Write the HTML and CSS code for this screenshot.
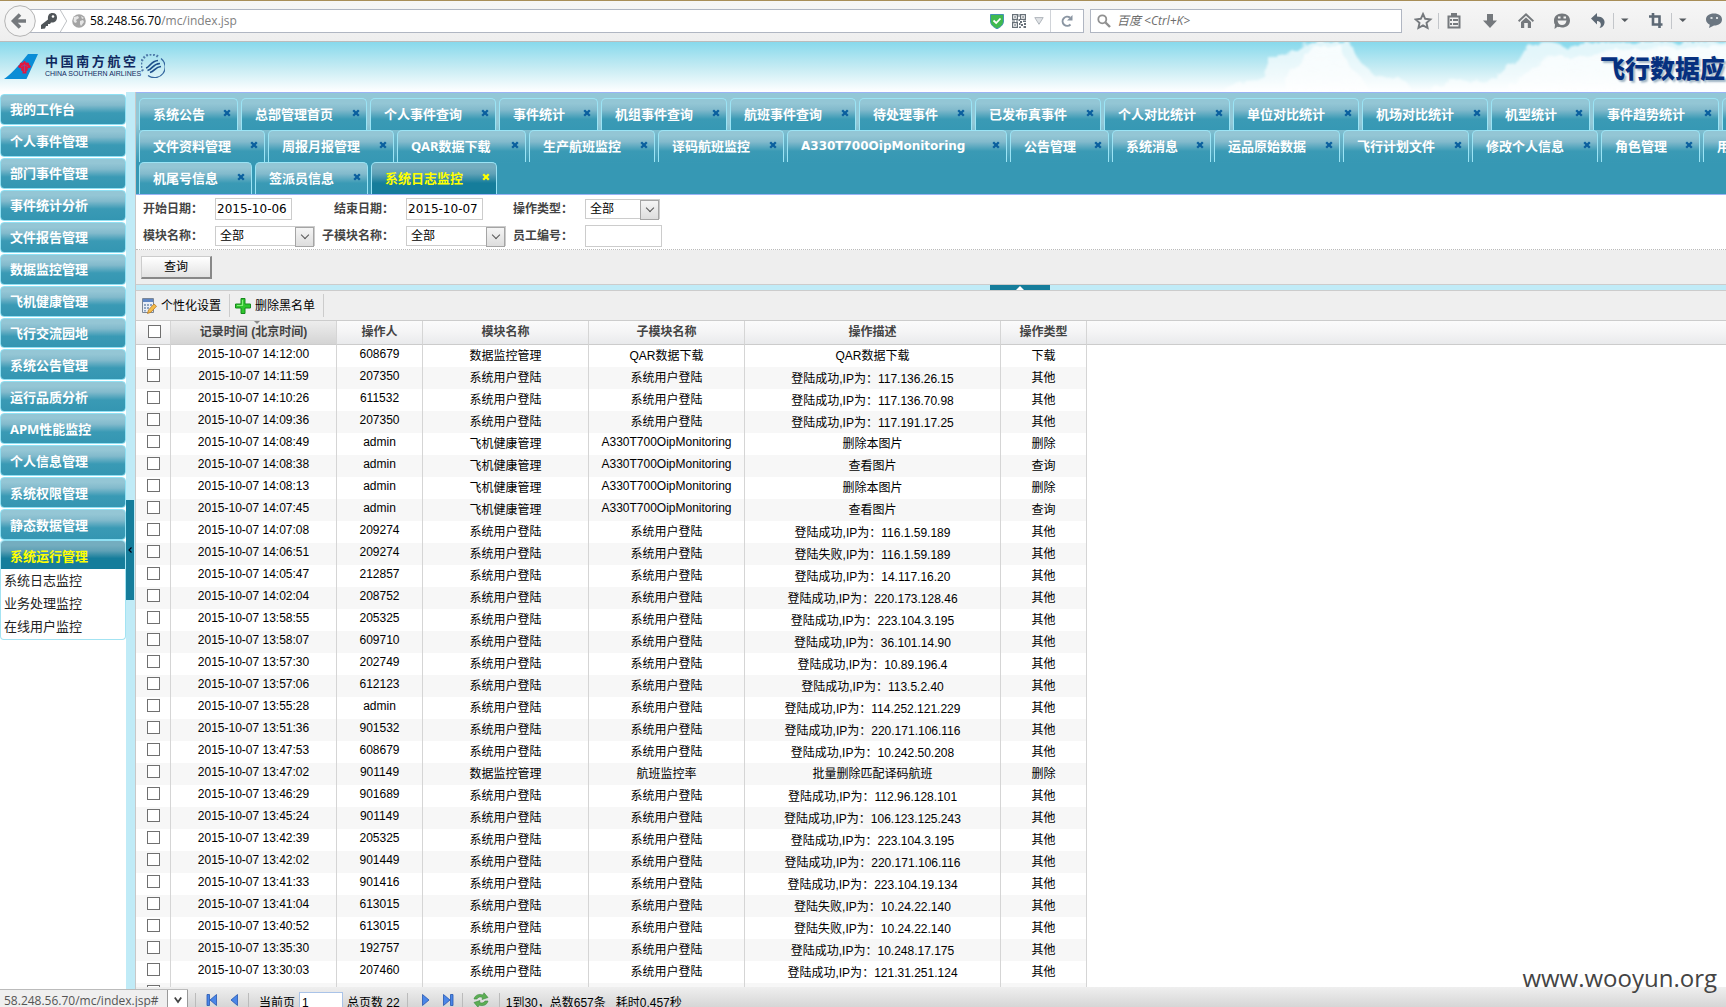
FILE: index.html
```html
<!DOCTYPE html>
<html lang="zh-CN">
<head>
<meta charset="utf-8">
<title>飞行数据应用系统</title>
<link rel="stylesheet" href="styles.css">
</head>
<body>
<svg class="defs" width="0" height="0" aria-hidden="true">
  <symbol id="close" viewBox="0 0 8 8"><path d="M1.2 1.2L6.800 6.800M6.800 1.200L1.200 6.800" stroke="currentColor" stroke-width="2.300" fill="none"/></symbol>
</svg>

<header class="browser">
  <div class="address">
    <button class="back" aria-label="后退"><svg viewBox="0 0 32 32"><circle cx="16" cy="16" r="15.300" fill="#f5f5f5" stroke="#b3b3b3"/><path d="M22 16H12M16 9.500L9.500 16L16 22.500" fill="none" stroke="#75797d" stroke-width="3.600"/></svg></button>
    <svg class="key" viewBox="0 0 18 18"><path d="M1 17V13L8 7.500C7.500 3 9.500 1 12.500 1C15.500 1 17 3 17 5.500C17 9 14.500 11 11 10.500L10 12H8V14H6L5 16.500Z" fill="#505559"/><circle cx="13" cy="4.500" r="1.300" fill="#fff"/></svg>
    <svg class="chev" viewBox="0 0 9 24"><path d="M1 0L8 12L1 24" fill="none" stroke="#b9bcc0"/></svg>
    <svg class="globe" viewBox="0 0 14 14"><circle cx="7" cy="7" r="6.800" fill="#a4a4a4"/><path d="M2 3L6 2L7 4L4 6L5 8L3 9L1.500 7ZM8 7L11 6L12 8L9 12L8 10ZM9 2L12 4L10 5Z" fill="#e6e6e6"/></svg>
    <span class="url"><b>58.248.56.70</b>/mc/index.jsp</span>
    <svg class="shield" viewBox="0 0 14 15"><path d="M0.500 0.500H13.500V7C13.500 11 10 13.500 7 14.700C4 13.500 0.500 11 0.500 7Z" fill="#3fba50" stroke="#4593b5"/><path d="M3.500 6.500L6.200 9L10.500 4.500" fill="none" stroke="#fff" stroke-width="1.800"/></svg>
    <svg class="qr" viewBox="0 0 14 14"><g fill="none" stroke="#677078" stroke-width="1.200"><path d="M.600.600H5.400V5.400H.600ZM8.600.600H13.400V5.400H8.600ZM.600 8.600H5.400V13.400H.600Z"/></g><path d="M2.300 2.300h1.500v1.500h-1.500zM10.300 2.300h1.500v1.500h-1.500zM2.300 10.300h1.500v1.500h-1.500zM6.500 0h1v3h-1zM6.500 5h1.500v2h-1.500zM0 6.500h3v1h-3zM8 7h2v2h-2zM11 6.500h3v1.500h-3zM7 9h1.500v2H7zM9 10h2v2H9zM12 9h2v2h-2zM7 12.500h2V14H7zM11.500 12h2.500v2h-2.500zM4 6.500h2v1h-2z" fill="#677078"/></svg>
    <svg class="drop" viewBox="0 0 10 8"><path d="M.800.600H9.200L5 7.300Z" fill="#dfe2e5" stroke="#b0b6bc"/></svg>
    <svg class="reload" viewBox="0 0 12 12"><path d="M9.500 9.500A4.600 4.600 0 1 1 9 2.600" fill="none" stroke="#8a95a2" stroke-width="2"/><path d="M11.500 0V5.500H6Z" fill="#8a95a2"/></svg>
  </div>
  <label class="search"><svg viewBox="0 0 14 14"><circle cx="5.300" cy="5.300" r="4" fill="none" stroke="#909090" stroke-width="1.800"/><path d="M8.500 8.500L13 13" stroke="#909090" stroke-width="2.400"/></svg><input placeholder="百度 &lt;Ctrl+K&gt;" aria-label="搜索"></label>
  <svg class="tools" viewBox="0 0 312 24">
    <path d="M9 5L11.200 9.800L16.400 10.400L12.500 13.900L13.600 19L9 16.400L4.400 19L5.500 13.900L1.600 10.400L6.800 9.800Z" fill="none" stroke="#75797d" stroke-width="1.900"/>
    <path d="M24.500 4V20M199.500 4V20M257.500 4V20" stroke="#c3c6ca"/>
    <path d="M34.500 7.500H45.500V18.500H34.500Z" fill="none" stroke="#75797d" stroke-width="2"/><path d="M37 4H43V8H37ZM36 10H38V12H36ZM39 10H44V12H39ZM36 14H38V16H36ZM39 14H44V16H39Z" fill="#75797d"/>
    <path d="M73 5H79V11.500H83L76 19L69 11.500H73Z" fill="#75797d"/>
    <path d="M112 4L120 11.500L118.800 13L112 6.800L105.200 13L104 11.500ZM112 8.500L117 13V19H113.800V14H110.200V19H107V13Z" fill="#75797d"/>
    <path d="M148 4.500C153 4.500 156 7.500 156 11.500C156 16 152.500 18.500 148 18.500C146 18.500 144.500 18 143.500 17.800L140.500 20L141 15.500C140 14.500 140 13 140 11.500C140 7.500 143 4.500 148 4.500Z" fill="#75797d"/><path d="M143.500 11.500H152.500C152 14.500 150.500 16 148 16C145.500 16 144 14.500 143.500 11.500ZM144 7.500h2.500v2h-2.500zM149.500 7.500h2.500v2h-2.500z" fill="#f3f3f3"/>
    <path d="M177 9.500L183 4V7.500C189 7.500 191 11 190.500 14C190 17 188 18.500 185.500 19C188 16 187 12 183 12V15.500Z" fill="#5d6975"/>
    <path d="M207 9.500H214.500L210.800 13ZM265 9.500H272.500L268.800 13Z" fill="#555b60"/>
    <path d="M239 4V15.500H248.500M235 7.500H245.500V19" fill="none" stroke="#5d6975" stroke-width="2.600"/>
    <path d="M300 4.500C305 4.500 308 7 308 10.500C308 14 305 16.500 300 16.500L295 19L295.800 15.800C293.500 14.500 292 13 292 10.500C292 7 295 4.500 300 4.500Z" fill="#6b7681"/><path d="M296.500 8h2v2h-2zM302 8h2v2h-2z" fill="#d8dde0"/>
  </svg>
</header>

<div class="banner">
  <div class="logo">
    <svg class="tail" viewBox="0 0 35 25"><path d="M24 0H34L22.500 25H0Q9 19 24 0Z" fill="#0a8dd6"/><path d="M20.500 7C21.500 7 22 8 21.800 9C24 7.800 26 9.500 25 11C27 11 27.500 13.500 25.500 14C24.500 14.500 24 14 23.500 14.500C24.500 16 23.500 17 22.500 17L22.500 19.500H18.500L18.500 17C17 17 16.500 16 17.500 14.500C17 14 16 14.500 15.500 14C13.500 13.500 14 11 16 11C15 9.500 17 7.800 19.200 9C19 8 19.500 7 20.500 7Z" fill="#e3173e"/><path d="M20.500 10V18M17 12.500Q20.500 10 24 12.500" stroke="#7f58a0" stroke-width=".700" fill="none"/></svg>
    <div class="logo-text"><strong>中国南方航空</strong><span>CHINA SOUTHERN AIRLINES</span></div>
    <svg class="skyteam" viewBox="0 0 24 24"><path d="M20 4.500A10.500 10.500 0 0 1 7 21.500" fill="none" stroke="#34679f" stroke-width="1.200"/><path d="M2 17A10.500 10.500 0 0 1 17 2.600" fill="none" stroke="#4c78a8" stroke-width="2.400" stroke-dasharray="1.800 1.700"/><path d="M5 14C9 13 10 7 17 6.500M6.500 16.500C12 15 11 10 19 9.500M9 18.500C14 17 14 13 20 12.500" fill="none" stroke="#1d4f8c" stroke-width="1.700"/></svg>
  </div>
  <svg class="clouds" viewBox="0 0 520 50" preserveAspectRatio="xMaxYMax slice">
    <defs>
      <filter id="puff" x="-10%" y="-20%" width="120%" height="140%"><feTurbulence type="fractalNoise" baseFrequency="0.090" numOctaves="3" seed="4"/><feDisplacementMap in="SourceGraphic" scale="9"/><feGaussianBlur stdDeviation="1"/></filter>
      <linearGradient id="mist" x1="0" y1="0" x2="0" y2="1"><stop offset="0" stop-color="#fff" stop-opacity=".75"/><stop offset="1" stop-color="#fff" stop-opacity=".55"/></linearGradient>
    </defs>
    <g fill="url(#mist)" filter="url(#puff)">
      <path d="M10 52Q30 38 50 40L58 34Q60 14 80 14L100 0H144Q150 20 162 26Q168 38 180 36Q200 34 204 46L206 54H10Z"/>
      <path d="M78 54Q84 24 98 16L108 4H136Q140 26 154 34L166 54Z"/>
      <path d="M222 54Q240 32 265 41L290 36Q292 24 312 20L320 6Q345 -4 360 6L375 2L420 0H540V54Z"/>
      <path d="M300 54Q310 30 330 26Q340 10 356 14Q380 20 400 8L540 4V54Z"/>
    </g>
  </svg>
  <h1>飞行数据应</h1>
</div>

<div class="app">
  <nav class="sidebar">
    <div class="menu">
      <a href="#">我的工作台</a><a href="#">个人事件管理</a><a href="#">部门事件管理</a><a href="#">事件统计分析</a><a href="#">文件报告管理</a><a href="#">数据监控管理</a><a href="#">飞机健康管理</a><a href="#">飞行交流园地</a><a href="#">系统公告管理</a><a href="#">运行品质分析</a><a href="#">APM性能监控</a><a href="#">个人信息管理</a><a href="#">系统权限管理</a><a href="#">静态数据管理</a>
    </div>
    <section class="open">
      <a class="open-title" href="#">系统运行管理</a>
      <a href="#">系统日志监控</a><a href="#">业务处理监控</a><a href="#">在线用户监控</a>
    </section>
  </nav>
  <div class="vsplit"><button aria-label="收起菜单"><svg viewBox="0 0 4 6"><path d="M3.500.500L1 3L3.500 5.500" fill="none" stroke="#001" stroke-width="1.200"/></svg></button></div>

  <main class="main">
    <div class="tabs" id="tabs"></div>

    <form class="filter">
      <div class="fields">
        <label for="d1">开始日期<i>：</i></label><input id="d1" value="2015-10-06">
        <label for="d2">结束日期<i>：</i></label><input id="d2" value="2015-10-07">
        <label for="s1">操作类型<i>：</i></label><span class="sel short"><select id="s1"><option>全部</option></select></span>
        <label for="s2">模块名称<i>：</i></label><span class="sel"><select id="s2"><option>全部</option></select></span>
        <label for="s3">子模块名称<i>：</i></label><span class="sel"><select id="s3"><option>全部</option></select></span>
        <label for="n1">员工编号<i>：</i></label><input id="n1" value="">
      </div>
      <div class="actions"><button type="button">查询</button></div>
    </form>

    <div class="hsplit"><button aria-label="收起查询"><svg viewBox="0 0 8 4"><path d="M0 4L4 0L8 4Z" fill="#fff"/></svg></button></div>

    <div class="toolbar">
      <button><svg viewBox="0 0 16 16"><path d="M1.500.500H12.500V14.500H1.500Z" fill="#e9eef6" stroke="#7a8797"/><path d="M2 1H12V4H2Z" fill="#5f86c4"/><path d="M3 6h2v2h-2zM6 6h2v2h-2zM9 6h2v2h-2zM3 9h2v2h-2zM6 9h2v2h-2zM3 12h2v1.500h-2z" fill="#8fa4c0"/><path d="M6.500 15.500L7.500 12L13 6L15.500 8.200L10 14.200Z" fill="#f5bd4a" stroke="#b77822" stroke-width=".800"/></svg>个性化设置</button>
      <button><svg viewBox="0 0 16 16"><path d="M6 .500H10V6H15.500V10H10V15.500H6V10H.500V6H6Z" fill="#2fc52d" stroke="#168a1c"/><path d="M7.500 2V7.500H2" fill="none" stroke="#86ee7a" stroke-width="1.200"/></svg>删除黑名单</button>
    </div>

    <div class="grid">
      <table>
        <colgroup><col class="c0"><col class="c1"><col class="c2"><col class="c3"><col class="c4"><col class="c5"><col class="c6"><col></colgroup>
        <thead><tr><th><input type="checkbox" aria-label="全选"></th><th class="sorted">记录时间 (北京时间)</th><th>操作人</th><th>模块名称</th><th>子模块名称</th><th>操作描述</th><th>操作类型</th><th></th></tr></thead>
        <tbody id="rows"></tbody>
      </table>
    </div>

    <div class="pager">
      <span class="sep"></span>
      <button aria-label="首页"><svg viewBox="0 0 12 12"><path d="M1 .500H3.500V11.500H1ZM10.500.500V11.500L4 6Z" fill="#4a86e8" stroke="#2457b0" stroke-width=".800"/></svg></button>
      <button aria-label="上一页"><svg viewBox="0 0 12 12"><path d="M9.500.500V11.500L3 6Z" fill="#4a86e8" stroke="#2457b0" stroke-width=".800"/></svg></button>
      <span class="sep"></span>
      <label for="pg">当前页</label><input id="pg" value="1"><span class="total">总页数 22</span>
      <span class="sep"></span>
      <button aria-label="下一页"><svg viewBox="0 0 12 12"><path d="M2.500.500V11.500L9 6Z" fill="#4a86e8" stroke="#2457b0" stroke-width=".800"/></svg></button>
      <button aria-label="末页"><svg viewBox="0 0 12 12"><path d="M1.500.500V11.500L8 6ZM8.500.500H11V11.500H8.500Z" fill="#4a86e8" stroke="#2457b0" stroke-width=".800"/></svg></button>
      <span class="sep"></span>
      <button class="refresh" aria-label="刷新"><svg viewBox="0 0 16 16"><path d="M1 7C2 3 6 1.500 10 3L11 .800L15 5.500L9 7.500L9.500 5.500C7 4.500 5 5 4 7ZM15 9C14 13 10 14.500 6 13L5 15.200L1 10.500L7 8.500L6.500 10.500C9 11.500 11 11 12 9Z" fill="#5cae54" stroke="#3b8a3c" stroke-width=".600"/></svg></button>
      <span class="sep"></span>
      <span class="info">1到30，总数657条&nbsp;&nbsp; 耗时0.457秒</span>
    </div>
  </main>
</div>

<div class="status"><span>58.248.56.70/mc/index.jsp#</span><i><svg viewBox="0 0 8 8"><path d="M.800 1.500L4 6L7.200 1.500" fill="none" stroke="#444" stroke-width="1.800"/></svg></i></div>
<div class="watermark">www.wooyun.org</div>
<script src="app.js"></script>
</body>
</html>
```
FILE: styles.css
```css
* { box-sizing: border-box; }
html, body { height: 100%; }
body {
  margin: 0;
  display: flex;
  flex-direction: column;
  overflow: hidden;
  background: #fff;
  color: #000;
  font: 12px/16px "Liberation Sans", "Noto Sans CJK SC", sans-serif;
}
a { color: inherit; text-decoration: none; }
button, input, select { font: inherit; color: inherit; margin: 0; padding: 0; border: 0; background: none; }
svg { display: block; flex: none; }
.defs { position: absolute; }

/* browser bar */
.browser {
  flex: none;
  height: 42px;
  display: flex;
  align-items: center;
  background: linear-gradient(#f6f6f6, #eee);
  border-top: 1px solid #a88e58;
  border-bottom: 1px solid #bcbcbc;
}
.address {
  flex: 1;
  height: 24px;
  margin-left: 20px;
  display: flex;
  align-items: center;
  background: #fff;
  border: 1px solid #b0b6c2;
}
.back { flex: none; width: 32px; height: 32px; margin-left: -17px; }
.key { width: 18px; height: 18px; margin-left: 4px; }
.chev { width: 9px; height: 22px; margin-left: 1px; }
.globe { width: 14px; height: 14px; margin: 0 4px; }
.url { flex: 1; font: 12px/24px "Open Sans", "Noto Sans", sans-serif; color: #808080; }
.url b { font-weight: 400; color: #000; }
.shield { width: 14px; height: 15px; margin-right: 8px; }
.qr { width: 14px; height: 14px; margin-right: 8px; }
.drop { width: 10px; height: 8px; margin-right: 6px; }
.reload { width: 33px; height: 22px; padding: 0 10px; border-left: 1px solid #d0d3d8; }
.search {
  width: 312px;
  height: 24px;
  margin: 0 12px 0 6px;
  display: flex;
  align-items: center;
  gap: 6px;
  padding-left: 6px;
  background: #fff;
  border: 1px solid #b0b6c2;
}
.search svg { width: 14px; height: 14px; }
.search input { flex: 1; outline: 0; font: italic 12px/20px "Open Sans", "Noto Sans CJK SC", sans-serif; }
.search input::placeholder { color: #6d6d6d; }
.tools { width: 312px; height: 24px; }

/* banner */
.banner {
  flex: none;
  height: 50px;
  display: grid;
  grid-template-columns: auto 1fr 126px;
  overflow: hidden;
  background: linear-gradient(#87d9ec, #c4ebf3 50%, #fff);
}
.logo { grid-area: 1 / 1; display: flex; padding: 12px 0 0 4px; }
.tail { width: 35px; height: 25px; margin-right: 6px; }
.logo-text { width: 96px; color: #10295f; white-space: nowrap; }
.logo-text strong { display: block; width: 91px; font-size: 13px; line-height: 16px; white-space: normal; text-align-last: justify; }
.logo-text span { display: block; font-size: 7px; line-height: 8px; }
.skyteam { width: 24px; height: 24px; }
.clouds { grid-area: 1 / 1 / 2 / 4; justify-self: end; width: 520px; height: 50px; }
h1 {
  grid-area: 1 / 3;
  margin: 0;
  font: 900 25px/50px "Noto Sans CJK SC", sans-serif;
  color: #06307f;
  white-space: nowrap;
  text-shadow: 2px 2px 2px #9fb4c4;
}

/* layout */
.app { flex: 1; min-height: 0; display: flex; }
.sidebar { flex: none; width: 126px; padding-top: 2px; font: 13px/16px "Noto Sans", "Noto Sans CJK SC", sans-serif; }
.menu { display: grid; grid-auto-rows: 1fr; row-gap: 1px; height: 446px; color: #fff; font-weight: 700; }
.menu a, .open-title {
  display: flex;
  align-items: center;
  padding-left: 9px;
  border: 1px solid #8fe0f3;
  border-radius: 4px;
  background: linear-gradient(#94c6d5 15%, #82bacc 35%, #3a9ab5 62%, #3496b2);
}
.open { border: 1px solid #a3e3f2; border-top: 0; border-radius: 4px; padding-bottom: 1px; }
.open a { display: block; padding-left: 3px; line-height: 23px; color: #222; }
.open .open-title {
  height: 29px;
  padding-left: 9px;
  line-height: 30px;
  border-width: 1px 0 0;
  border-radius: 4px 4px 0 0;
  color: #ff0;
  font-weight: 700;
  background: linear-gradient(#74adbf 15%, #5fa1b6 35%, #157d9b 62%, #157d9b);
}
.vsplit { flex: none; width: 9px; display: flex; align-items: center; background: #c0ebf7; }
.vsplit button { width: 8px; height: 100px; background: #157d9b; }
.vsplit svg { width: 4px; height: 6px; margin: auto; }
.main { flex: 1; min-width: 0; display: flex; flex-direction: column; border-left: 1px solid #c8c8c8; }

/* tabs */
.tabs {
  flex: none;
  border: solid #99b3f5;
  border-width: 1px 0 1px;
  padding: 5px 0 0 3px;
  overflow: hidden;
  background: linear-gradient(#92c7d6 30px, #3698b4 70px);
}
.tab-row { display: flex; gap: 3px; height: 32px; }
.tab {
  flex: none;
  display: flex;
  justify-content: space-between;
  height: 32px;
  padding: 0 6px 0 13px;
  border: 1px solid #9be4f5;
  border-bottom: 0;
  border-radius: 5px 5px 0 0;
  background: linear-gradient(#93c6d5 15%, #82bacc 35%, #3a9ab5 65%, #3698b4);
  color: #fff;
  font: 700 13px/31px "Noto Sans", "Noto Sans CJK SC", sans-serif;
  white-space: nowrap;
}
.tab button { width: 8px; height: 27px; color: #0a5f9e; }
.tab button svg { width: 8px; height: 8px; }
.tab.on { color: #ff0; background: linear-gradient(#74adbf 15%, #5fa1b6 35%, #157d9b 65%, #157d9b); }
.tab.on button { color: #ff0; }
.n4 { width: 99px; }
.n5 { width: 113px; }
.n6 { width: 126px; }
.n7 { width: 129px; }
.nx { width: 220px; font-family: "DejaVu Sans", sans-serif; font-size: 12px; }

/* query form */
.fields {
  display: grid;
  grid-template-columns: 72px 107px 84px 107px 72px 80px;
  grid-template-rows: 27px 27px;
  align-items: center;
  padding-left: 7px;
  border-bottom: 1px dotted #bbb;
}
.fields label { font-weight: 700; color: #444; white-space: nowrap; }
.fields label:nth-of-type(2) { padding-left: 12px; }
label i, td i { font-family: "Noto Sans CJK TC", sans-serif; font-style: normal; }
.fields input { width: 77px; height: 22px; padding: 0 1px; border: 1px solid #ccc; background: #fff; font: 12px/20px "DejaVu Sans", sans-serif; }
.sel { position: relative; width: 100px; height: 20px; border: 1px solid #ccc; }
.sel.short { width: 75px; }
.sel select { appearance: none; display: block; width: 100%; height: 18px; padding-left: 4px; }
.sel::before { content: ""; position: absolute; right: 0; top: 0; width: 17px; height: 18px; border: 1px solid #a5a5a5; background: linear-gradient(#f5f5f5, #ddd); pointer-events: none; }
.sel::after { content: ""; position: absolute; right: 6px; top: 5px; width: 5px; height: 5px; border: solid #555; border-width: 0 1px 1px 0; rotate: 45deg; pointer-events: none; }
.actions { height: 35px; padding: 6px 0 0 5px; background: #eee; border-bottom: 1px solid #ccc; }
.actions button { width: 71px; height: 23px; border: 1px solid #ccc; border-right: 2px solid #888; border-bottom: 2px solid #888; background: linear-gradient(#fff, #e2e2e2); }
.hsplit { flex: none; height: 5px; display: flex; justify-content: center; background: #c0ebf7; }
.hsplit button { width: 60px; height: 5px; margin-left: 178px; background: #157d9b; }
.hsplit svg { width: 8px; height: 4px; margin: auto; }

/* toolbar */
.toolbar { flex: none; height: 31px; display: flex; align-items: center; background: #efefef; border: solid #ccc; border-width: 1px 0; }
.toolbar button { height: 23px; display: flex; align-items: center; gap: 4px; padding: 0 8px 0 5px; border-right: 1px solid #ccc; }
.toolbar svg { width: 16px; height: 16px; }

/* data grid */
.grid { flex: 1; min-height: 0; overflow: hidden; }
table { width: 100%; table-layout: fixed; border-collapse: separate; border-spacing: 0; }
.c0 { width: 35px; } .c1 { width: 166px; } .c2 { width: 86px; } .c3 { width: 166px; }
.c4 { width: 156px; } .c5 { width: 256px; } .c6 { width: 86px; }
th, td { padding: 0; text-align: center; white-space: nowrap; border-right: 1px solid #d5d5d5; }
th { height: 24px; padding-bottom: 2px; color: #444; background: linear-gradient(#fbfbfb, #f4f4f5 50%, #e9eaec); border-bottom: 1px solid #ccc; }
th:last-child, td:last-child { border-right: 0; }
th.sorted { position: relative; background: linear-gradient(#ededed, #d4d4d4); }
th.sorted::before { content: ""; position: absolute; left: 50%; top: 0; border: solid transparent; border-width: 3px 3px 0; border-top-color: #888; }
td { height: 22px; line-height: 18px; vertical-align: top; }
td.zh { padding-top: 2px; }
tr:nth-child(even) td { background: #f7f7f7; }
tbody tr td:last-child { background: #fff; }
input[type="checkbox"] { appearance: none; display: block; width: 13px; height: 13px; margin: 2px auto 0 11px; border: 1px solid #707070; background: #fff; }
th input[type="checkbox"] { margin: 0 auto 0 12px; }

/* pager */
.pager {
  flex: none;
  height: 32px;
  margin-bottom: -12px;
  padding-left: 59px;
  display: flex;
  align-items: center;
  background: linear-gradient(#efefef, #d6d6d6 20px);
}
.pager .sep { width: 1px; height: 20px; margin-right: 10px; background: #bbb; }
.pager button { width: 12px; height: 12px; margin: -6px 10px 0 0; }
.pager button + .sep { margin-left: -2px; margin-right: 10px; }
.pager input { width: 44px; height: 22px; margin: 0 4px; padding-left: 2px; border: 1px solid #a9c3e8; background: #fff; }
.pager .total { margin-right: 7px; }
.pager .total + .sep { margin-right: 12px; }
.pager .refresh { width: 16px; height: 16px; }
.pager .refresh + .sep { margin-left: 0; margin-right: 6px; }

/* overlays */
.status {
  position: absolute;
  left: 0;
  bottom: 0;
  display: flex;
  width: 188px;
  height: 18px;
  background: #efefef;
  border-top: 1px solid #bbb;
  font: 12px/22px "Open Sans", sans-serif;
  color: #555;
}
.status span { flex: 1; padding-left: 4px; overflow: hidden; }
.status i { width: 21px; background: #fff; border: solid #999; border-width: 0 1px; }
.status svg { width: 8px; height: 8px; margin: 6px auto; }
.watermark { position: absolute; right: 9px; bottom: 12px; color: #444; font: 24px/34px "Open Sans", sans-serif; }
```
FILE: app.js
```js
const tabs = [
  ["系统公告", "总部管理首页", "个人事件查询", "事件统计", "机组事件查询", "航班事件查询", "待处理事件", "已发布真事件", "个人对比统计", "单位对比统计", "机场对比统计", "机型统计", "事件趋势统计", ""],
  ["文件资料管理", "周报月报管理", "QAR数据下载", "生产航班监控", "译码航班监控", "A330T700OipMonitoring", "公告管理", "系统消息", "运品原始数据", "飞行计划文件", "修改个人信息", "角色管理", "用户管理"],
  ["机尾号信息", "签派员信息", "系统日志监控"]
];
const active = "系统日志监控";
document.getElementById("tabs").innerHTML = tabs.map(row =>
  '<div class="tab-row">' + row.map(t => {
    const size = t.length > 8 ? "nx" : "n" + Math.max(4, Math.min(t.length, 7));
    return `<div class="tab ${size}${t === active ? " on" : ""}"><a href="#">${t}</a>` +
      '<button aria-label="关闭"><svg><use href="#close"/></svg></button></div>';
  }).join("") + "</div>").join("");

const ip = (time, user, addr, result = "成功") =>
  [time, user, "系统用户登陆", "系统用户登陆", `登陆${result},IP为<i>：</i>${addr}`, "其他"];
const oip = (time, text, type) =>
  [time, "admin", "飞机健康管理", "A330T700OipMonitoring", text, type];
const rows = [
  ["14:12:00", "608679", "数据监控管理", "QAR数据下载", "QAR数据下载", "下载"],
  ip("14:11:59", "207350", "117.136.26.15"),
  ip("14:10:26", "611532", "117.136.70.98"),
  ip("14:09:36", "207350", "117.191.17.25"),
  oip("14:08:49", "删除本图片", "删除"),
  oip("14:08:38", "查看图片", "查询"),
  oip("14:08:13", "删除本图片", "删除"),
  oip("14:07:45", "查看图片", "查询"),
  ip("14:07:08", "209274", "116.1.59.189"),
  ip("14:06:51", "209274", "116.1.59.189", "失败"),
  ip("14:05:47", "212857", "14.117.16.20"),
  ip("14:02:04", "208752", "220.173.128.46"),
  ip("13:58:55", "205325", "223.104.3.195"),
  ip("13:58:07", "609710", "36.101.14.90"),
  ip("13:57:30", "202749", "10.89.196.4"),
  ip("13:57:06", "612123", "113.5.2.40"),
  ip("13:55:28", "admin", "114.252.121.229"),
  ip("13:51:36", "901532", "220.171.106.116"),
  ip("13:47:53", "608679", "10.242.50.208"),
  ["13:47:02", "901149", "数据监控管理", "航班监控率", "批量删除匹配译码航班", "删除"],
  ip("13:46:29", "901689", "112.96.128.101"),
  ip("13:45:24", "901149", "106.123.125.243"),
  ip("13:42:39", "205325", "223.104.3.195"),
  ip("13:42:02", "901449", "220.171.106.116"),
  ip("13:41:33", "901416", "223.104.19.134"),
  ip("13:41:04", "613015", "10.24.22.140", "失败"),
  ip("13:40:52", "613015", "10.24.22.140", "失败"),
  ip("13:35:30", "192757", "10.248.17.175"),
  ip("13:30:03", "207460", "121.31.251.124"),
  ["", "", "", "", "", ""]
];
document.getElementById("rows").innerHTML = rows.map(r =>
  '<tr><td><input type="checkbox" aria-label="选择"></td>' + r.map((c, i) => {
    const text = i === 0 && c ? "2015-10-07 " + c : c;
    return `<td${/[\u4e00-\u9fff]/.test(text) ? ' class="zh"' : ""}>${text}</td>`;
  }).join("") + "<td></td></tr>").join("");
```
